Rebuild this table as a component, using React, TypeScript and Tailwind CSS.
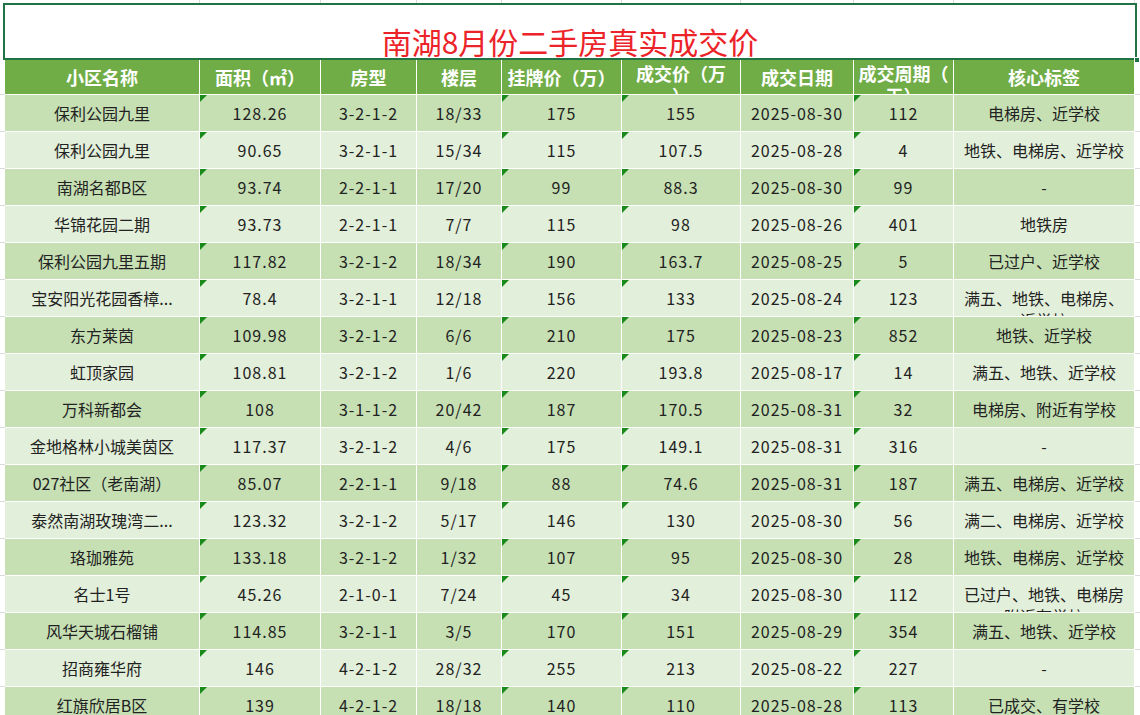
import React from 'react';

const COLS = [195, 121, 96, 85, 120, 119, 113, 100, 181];
const MARKED = [1, 4, 5, 7];

type Row = string[];

const ROWS: Row[] = [
    ['保利公园九里', '128.26', '3-2-1-2', '18/33', '175', '155', '2025-08-30', '112', '电梯房、近学校'],
    ['保利公园九里', '90.65', '3-2-1-1', '15/34', '115', '107.5', '2025-08-28', '4', '地铁、电梯房、近学校'],
    ['南湖名都B区', '93.74', '2-2-1-1', '17/20', '99', '88.3', '2025-08-30', '99', '-'],
    ['华锦花园二期', '93.73', '2-2-1-1', '7/7', '115', '98', '2025-08-26', '401', '地铁房'],
    ['保利公园九里五期', '117.82', '3-2-1-2', '18/34', '190', '163.7', '2025-08-25', '5', '已过户、近学校'],
    ['宝安阳光花园香樟...', '78.4', '3-2-1-1', '12/18', '156', '133', '2025-08-24', '123', '满五、地铁、电梯房、|近学校'],
    ['东方莱茵', '109.98', '3-2-1-2', '6/6', '210', '175', '2025-08-23', '852', '地铁、近学校'],
    ['虹顶家园', '108.81', '3-2-1-2', '1/6', '220', '193.8', '2025-08-17', '14', '满五、地铁、近学校'],
    ['万科新都会', '108', '3-1-1-2', '20/42', '187', '170.5', '2025-08-31', '32', '电梯房、附近有学校'],
    ['金地格林小城美茵区', '117.37', '3-2-1-2', '4/6', '175', '149.1', '2025-08-31', '316', '-'],
    ['027社区（老南湖）', '85.07', '2-2-1-1', '9/18', '88', '74.6', '2025-08-31', '187', '满五、电梯房、近学校'],
    ['泰然南湖玫瑰湾二...', '123.32', '3-2-1-2', '5/17', '146', '130', '2025-08-30', '56', '满二、电梯房、近学校'],
    ['珞珈雅苑', '133.18', '3-2-1-2', '1/32', '107', '95', '2025-08-30', '28', '地铁、电梯房、近学校'],
    ['名士1号', '45.26', '2-1-0-1', '7/24', '45', '34', '2025-08-30', '112', '已过户、地铁、电梯房|附近有学校'],
    ['风华天城石榴铺', '114.85', '3-2-1-1', '3/5', '170', '151', '2025-08-29', '354', '满五、地铁、近学校'],
    ['招商雍华府', '146', '4-2-1-2', '28/32', '255', '213', '2025-08-22', '227', '-'],
    ['红旗欣居B区', '139', '4-2-1-2', '18/18', '140', '110', '2025-08-28', '113', '已成交、有学校'],
];

const HEADERS = ['小区名称', '面积（㎡）', '房型', '楼层', '挂牌价（万）', '成交价（万|）', '成交日期', '成交周期（|天）', '核心标签'];

const FONT = '"Noto Sans CJK SC", "Noto Sans", sans-serif';

function Marker() {
    return (
        <span className="absolute left-0 top-0 h-0 w-0 border-t-[7px] border-r-[7px] border-t-[#1a8a1a] border-r-transparent" />
    );
}

function HeaderCell({ text, width }: { text: string; width: number }) {
    const lines = text.split('|');
    if (lines.length > 1) {
        return (
            <div
                className="shrink-0 h-full overflow-hidden border-r border-white flex flex-col items-center pt-[2px] leading-[22px] whitespace-nowrap"
                style={{ width }}
            >
                <span>{lines[0]}</span>
                <span>{lines[1]}</span>
            </div>
        );
    }
    return (
        <div
            className="shrink-0 h-full overflow-hidden border-r border-white flex items-center justify-center whitespace-nowrap"
            style={{ width }}
        >
            {text}
        </div>
    );
}

function DataCell({ text, width, marked, numeric }: { text: string; width: number; marked: boolean; numeric: boolean }) {
    const lines = text.split('|');
    return (
        <div
            className={`relative shrink-0 h-full overflow-hidden border-r border-white flex items-center justify-center whitespace-nowrap ${numeric ? 'tracking-[1px]' : ''}`}
            style={{ width }}
        >
            {marked && <Marker />}
            {lines.length > 1 ? (
                <div className="flex flex-col items-center pt-[22px] leading-[22px]">
                    <span>{lines[0]}</span>
                    <span>{lines[1]}</span>
                </div>
            ) : (
                <span>{text}</span>
            )}
        </div>
    );
}

function Gutter({ last }: { last?: boolean }) {
    return <div className={`shrink-0 h-full border-b border-[#dadada] ${last ? 'flex-1' : 'w-[5px]'}`} />;
}

export default function App() {
    return (
        <div className="relative w-[1140px] h-[715px] overflow-hidden bg-white" style={{ fontFamily: FONT }}>
            {/* sheet gridlines above the title */}
            <div className="flex h-[3px] pl-[5px]">
                {COLS.map((w, i) => (
                    <div key={i} className="shrink-0 h-full border-r border-[#dadada]" style={{ width: w }} />
                ))}
            </div>

            {/* merged title cell, selected */}
            <div className="relative mx-[3px] h-[57px] border-2 border-[#217346] flex items-end justify-center">
                <span className="text-[30px] leading-[34px] text-[#ec2328]">南湖8月份二手房真实成交价</span>
                <span className="absolute -right-[5px] -bottom-[5px] w-[6px] h-[6px] bg-[#217346] border border-white" />
            </div>

            {/* header row */}
            <div className="flex h-[35px] text-[18px] font-bold text-white">
                <Gutter />
                <div className="flex h-full bg-[#70ad47] border-b border-white">
                    {HEADERS.map((h, i) => (
                        <HeaderCell key={i} text={h} width={COLS[i]} />
                    ))}
                </div>
                <Gutter last />
            </div>

            {/* data rows */}
            {ROWS.map((row, r) => (
                <div key={r} className="flex h-[37px] text-[16px] text-[#222]">
                    <Gutter />
                    <div className={`flex h-full border-b border-white ${r % 2 === 0 ? 'bg-[#c6e0b4]' : 'bg-[#e2efda]'}`}>
                        {row.map((c, i) => (
                            <DataCell
                                key={i}
                                text={c}
                                width={COLS[i]}
                                marked={MARKED.includes(i)}
                                numeric={i > 0 && i < 8}
                            />
                        ))}
                    </div>
                    <Gutter last />
                </div>
            ))}
        </div>
    );
}
